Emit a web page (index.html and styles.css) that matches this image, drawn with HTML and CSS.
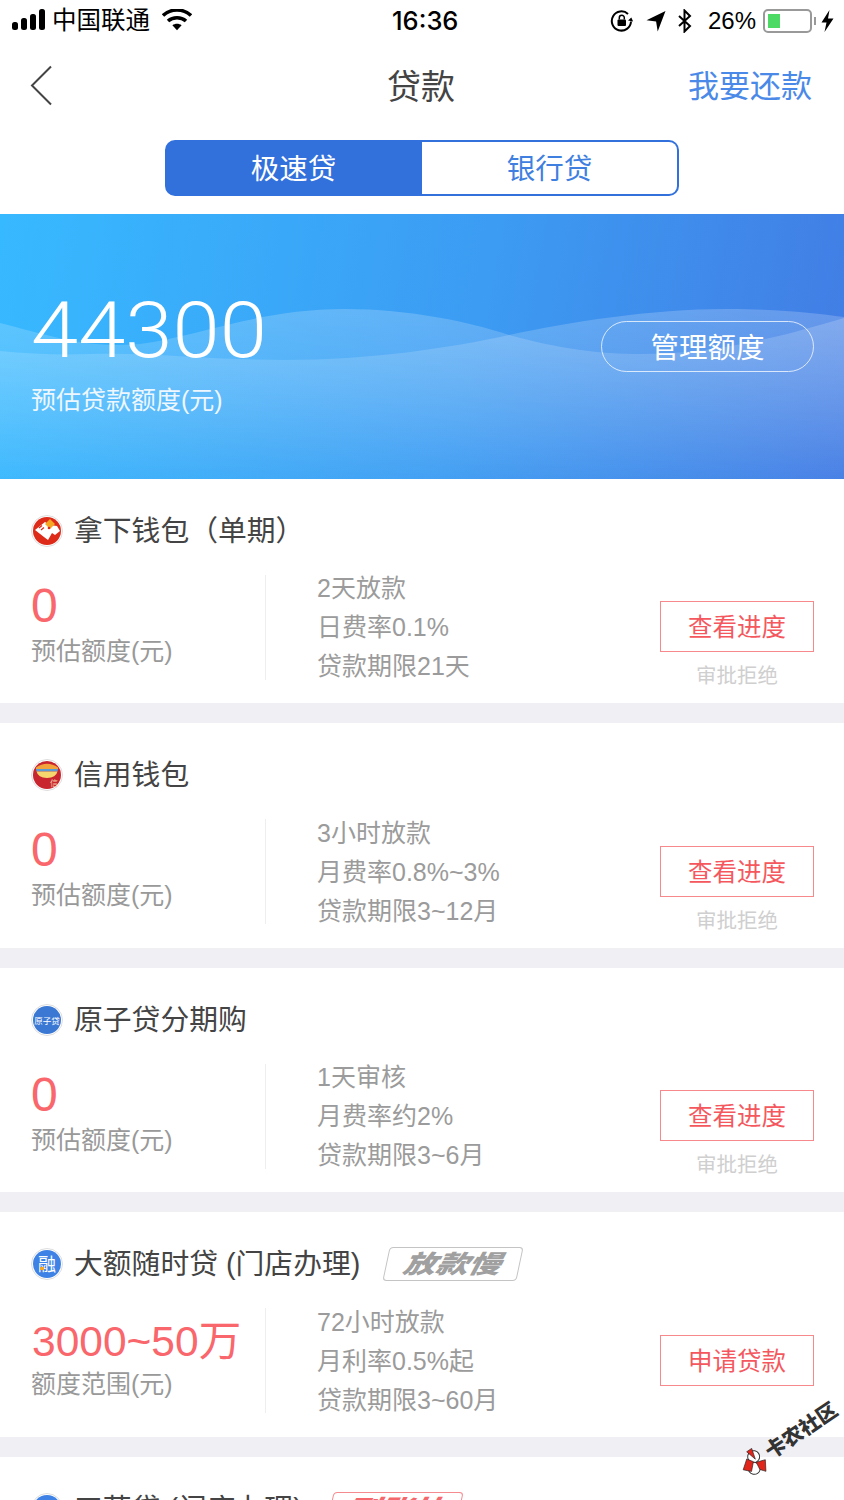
FILE: index.html
```html
<!DOCTYPE html>
<html lang="zh-CN">
<head>
  <meta charset="UTF-8">
  <title>贷款</title>
  <meta name="viewport" content="width=device-width, initial-scale=1.0">
  <link rel="stylesheet" href="styles.css">
</head>
<body>

<div class="page">
  <div class="status">
    <div class="status-left">
      <svg class="signal" width="34" height="22" viewBox="0 0 34 22"><rect x="0" y="13" width="6" height="8" rx="2.5"/><rect x="9" y="9" width="6" height="12" rx="2.5"/><rect x="18" y="5" width="6" height="16" rx="2.5"/><rect x="27" y="0" width="6" height="21" rx="2.5"/></svg>
      <span class="carrier">中国联通</span>
      <svg class="wifi" width="30" height="22" viewBox="0 0 30 22"><path d="M1 6.500C9 -.8 21 -.8 29 6.500" fill="none" stroke="#000" stroke-width="3.6"/><path d="M6 12C11 7.600 19 7.600 24 12" fill="none" stroke="#000" stroke-width="3.6"/><path d="M10.400 16.200C13 14.200 17 14.200 19.600 16.200L15 21.200Z"/></svg>
    </div>
    <div class="status-time">16:36</div>
    <div class="status-right">
      <svg width="24" height="24" viewBox="0 0 24 24"><path d="M21 12.500A9.600 9.600 0 1 1 18 5" fill="none" stroke="#000" stroke-width="2"/><path d="M21 8.500l2.600 3.600h-5.200z" transform="rotate(12 21 10)"/><rect x="7.500" y="10.500" width="8.500" height="6.500" rx="1"/><path d="M9.300 10.500V8.700a2.500 2.500 0 0 1 5 0v1.800" fill="none" stroke="#000" stroke-width="1.500"/></svg>
      <svg class="locate" width="20" height="22" viewBox="0 0 20 22"><path d="M19.500 1L0.500 10.200l9.600 1.200 1.600 10z"/></svg>
      <svg class="bt" width="16" height="24" viewBox="0 0 16 24"><path d="M2 7l11 10-5.500 5.500V1.500L13 7 2 17" fill="none" stroke="#000" stroke-width="2"/></svg>
      <span class="battery-text">26%</span>
      <div class="battery"><div class="battery-level"></div></div>
      <div class="battery-cap"></div>
      <svg class="bolt" width="13" height="22" viewBox="0 0 13 22"><path d="M8.500 0L0.500 12.500h5L3.500 22l9-13.500h-5.500z"/></svg>
    </div>
  </div>

  <div class="nav">
    <svg class="back" width="24" height="42" viewBox="0 0 24 42"><path d="M21 1.500L2 20.500l19 19" fill="none" stroke="#444" stroke-width="2"/></svg>
    <div class="nav-title">贷款</div>
    <div class="nav-action">我要还款</div>
  </div>

  <div class="tabs">
    <div class="tab tab-active">极速贷</div>
    <div class="tab">银行贷</div>
  </div>

  <div class="hero">
    <svg class="hero-waves" viewBox="0 0 844 265" preserveAspectRatio="none">
      <defs>
        <linearGradient id="waveFill" x1="0" y1="0" x2="0" y2="1">
          <stop offset="0" stop-color="#fff" stop-opacity=".2"/>
          <stop offset="1" stop-color="#fff" stop-opacity=".02"/>
        </linearGradient>
      </defs>
      <path fill="url(#waveFill)" d="M0 109C50 122 90 135 140 130C200 122 260 95 344 95C410 95 470 108 509 121C560 135 600 140 640 140C720 140 790 120 844 104V265H0Z"/>
      <path fill="url(#waveFill)" d="M0 137C30 140 60 141 90 140C150 138 210 146 285 146C370 146 450 134 509 121C570 108 650 95 727 95C775 95 815 99 844 103V265H0Z"/>
    </svg>
    <div class="hero-info">
      <div class="hero-amount">44300</div>
      <div class="hero-label">预估贷款额度(元)</div>
    </div>
    <div class="hero-btn">管理额度</div>
  </div>

  <div class="card">
    <div class="card-title">
      <svg class="logo" viewBox="0 0 32 32">
        <circle cx="16" cy="16" r="15.500" fill="#fff" stroke="#ddd"/>
        <circle cx="16" cy="16" r="14" fill="#de2a18"/>
        <path d="M4 15L14 7L19 10L26 11L29 16L24 20L21 18L17 25L13 22Z" fill="#fff"/>
        <path d="M14 9L19 4L24 9L19 14Z" fill="#f5a623"/>
        <path d="M8 13l3-2.500M10 15l3-2.500" stroke="#de2a18" stroke-width="1.200"/>
        <circle cx="18" cy="13" r="1.300" fill="#de2a18"/>
      </svg>
      <span>拿下钱包（单期）</span>
    </div>
    <div class="card-body">
      <div class="quota">
        <div class="quota-num">0</div>
        <div class="quota-label">预估额度(元)</div>
      </div>
      <div class="terms">
        <div>2天放款</div>
        <div>日费率0.1%</div>
        <div>贷款期限21天</div>
      </div>
      <div class="actions">
        <div class="btn">查看进度</div>
        <div class="btn-note">审批拒绝</div>
      </div>
    </div>
  </div>

  <div class="card">
    <div class="card-title">
      <svg class="logo" viewBox="0 0 32 32">
        <circle cx="16" cy="16" r="15.500" fill="#fff" stroke="#ddd"/>
        <circle cx="16" cy="16" r="14" fill="#c9252f"/>
        <path d="M5 8.500Q16 1 27 8.500V10H5z" fill="#f2a33c"/>
        <path d="M5 10H27L26.500 12.500H5.500z" fill="#5b9bd5"/>
        <path d="M5.500 12.500H26.500Q25 18.500 16 19Q7 18.500 5.500 12.500z" fill="#f5d76e"/>
        <text x="23" y="27" class="logo-text logo-text-light" font-size="8">信</text>
      </svg>
      <span>信用钱包</span>
    </div>
    <div class="card-body">
      <div class="quota">
        <div class="quota-num">0</div>
        <div class="quota-label">预估额度(元)</div>
      </div>
      <div class="terms">
        <div>3小时放款</div>
        <div>月费率0.8%~3%</div>
        <div>贷款期限3~12月</div>
      </div>
      <div class="actions">
        <div class="btn">查看进度</div>
        <div class="btn-note">审批拒绝</div>
      </div>
    </div>
  </div>

  <div class="card">
    <div class="card-title">
      <svg class="logo" viewBox="0 0 32 32">
        <circle cx="16" cy="16" r="15.500" fill="#fff" stroke="#ddd"/>
        <circle cx="16" cy="16" r="14" fill="#3a78d4"/>
        <text x="16" y="19.500" class="logo-text" font-size="8.500">原子贷</text>
      </svg>
      <span>原子贷分期购</span>
    </div>
    <div class="card-body">
      <div class="quota">
        <div class="quota-num">0</div>
        <div class="quota-label">预估额度(元)</div>
      </div>
      <div class="terms">
        <div>1天审核</div>
        <div>月费率约2%</div>
        <div>贷款期限3~6月</div>
      </div>
      <div class="actions">
        <div class="btn">查看进度</div>
        <div class="btn-note">审批拒绝</div>
      </div>
    </div>
  </div>

  <div class="card">
    <div class="card-title">
      <svg class="logo" viewBox="0 0 32 32">
        <circle cx="16" cy="16" r="15.500" fill="#fff" stroke="#ddd"/>
        <circle cx="16" cy="16" r="14" fill="#3f82e6"/>
        <text x="16" y="22.500" class="logo-text" font-size="18">融</text>
        <rect x="9" y="19" width="4" height="3" fill="#f5a623"/>
      </svg>
      <span>大额随时贷 (门店办理)</span>
      <div class="tag tag-slow"><span>放款慢</span></div>
    </div>
    <div class="card-body">
      <div class="quota">
        <div class="quota-num quota-range">3000~50万</div>
        <div class="quota-label">额度范围(元)</div>
      </div>
      <div class="terms">
        <div>72小时放款</div>
        <div>月利率0.5%起</div>
        <div>贷款期限3~60月</div>
      </div>
      <div class="actions">
        <div class="btn">申请贷款</div>
      </div>
    </div>
  </div>

  <div class="card">
    <div class="card-title">
      <svg class="logo" viewBox="0 0 32 32">
        <circle cx="16" cy="16" r="15.500" fill="#fff" stroke="#ddd"/>
        <circle cx="16" cy="16" r="14" fill="#3f82e6"/>
      </svg>
      <span>工薪贷 (门店办理)</span>
      <div class="tag tag-fast"><span>到账快</span></div>
    </div>
  </div>

  <div class="watermark">
    <svg width="30" height="30" viewBox="0 0 30 30">
      <circle cx="17" cy="10" r="6" fill="#fff" stroke="#333"/>
      <circle cx="11" cy="20" r="6" fill="#fff" stroke="#333"/>
      <path d="M1 15l9-7 4 6-7 7zM14 2l6 0-3 11zM16 16l9 3-6 10-4-5z" fill="#e1251b" stroke="#222" stroke-width=".6"/>
    </svg>
    <span>卡农社区</span>
  </div>
</div>

</body>
</html>
```

FILE: styles.css
```css
html, body {
  margin: 0;
  height: 1500px;
  overflow: hidden;
}
body {
  background: #fff;
  color: #444;
  font-family: "Liberation Sans", "Noto Sans CJK SC", sans-serif;
}
.page {
  position: relative;
  height: 1500px;
  overflow: hidden;
  background: #efeff4;
}

/* status bar */
.status {
  display: flex;
  align-items: center;
  justify-content: space-between;
  height: 42px;
  padding: 0 10px 0 12px;
  background: #fff;
  color: #000;
}
.status-left, .status-right {
  display: flex;
  align-items: center;
  width: 300px;
}
.status-right {
  justify-content: flex-end;
  width: 240px;
}
.signal {
  margin-top: -2px;
}
.carrier {
  margin-left: 6px;
  font-size: 24.500px;
  line-height: 42px;
}
.wifi {
  margin-left: 12px;
  margin-top: -2px;
}
.status-time {
  position: absolute;
  left: 392px;
  top: 4px;
  font-family: "Inter", sans-serif;
  font-size: 25.500px;
  font-weight: 500;
  line-height: 34px;
}
.locate {
  margin-left: 12px;
}
.bt {
  margin-left: 11px;
}
.battery-text {
  margin-left: 15px;
  font-size: 24px;
  line-height: 42px;
}
.battery {
  box-sizing: border-box;
  width: 49px;
  height: 24px;
  margin-left: 7px;
  padding: 3px;
  border: 2px solid #999;
  border-radius: 5px;
}
.battery-level {
  width: 12px;
  height: 14px;
  background: #4cd964;
}
.battery-cap {
  width: 2px;
  height: 8px;
  margin-left: 2px;
  background: #999;
}
.bolt {
  margin-left: 5px;
}

/* nav */
.nav {
  position: relative;
  display: flex;
  align-items: center;
  justify-content: space-between;
  height: 86px;
  padding: 0 32px 0 30px;
  background: #fff;
}
.back {
  margin-top: 2px;
}
.nav-title {
  position: absolute;
  left: 387px;
  top: 20px;
  font-size: 34px;
  line-height: 50px;
  color: #444;
}
.nav-action {
  padding-top: 4px;
  font-size: 31px;
  line-height: 50px;
  color: #4a89e8;
}

/* tabs */
.tabs {
  display: flex;
  justify-content: center;
  padding: 12px 0 18px;
  background: #fff;
}
.tab {
  box-sizing: border-box;
  width: 257px;
  height: 56px;
  border: 2px solid #3271dc;
  border-left: 0;
  border-radius: 0 10px 10px 0;
  font-size: 28.500px;
  line-height: 54px;
  text-align: center;
  color: #3f7fdf;
}
.tab-active {
  border-left: 2px solid #3271dc;
  border-radius: 10px 0 0 10px;
  background: #3271dc;
  color: #fff;
}

/* hero */
.hero {
  position: relative;
  display: flex;
  justify-content: space-between;
  height: 264.500px;
  padding: 0 30px 0 31px;
  background: linear-gradient(100deg, #37b9ff 0%, #3c9cf3 55%, #427ce4 100%);
  color: #fff;
}
.hero-waves {
  position: absolute;
  left: 0;
  top: 0;
  width: 844px;
  height: 265px;
}
.hero-info, .hero-btn {
  position: relative;
}
.hero-amount {
  margin-top: 72px;
  font-family: "Roboto", sans-serif;
  font-size: 78px;
  font-weight: 300;
  line-height: 90px;
  transform: scaleX(1.090);
  transform-origin: left center;
}
.hero-label {
  margin-top: 6px;
  font-size: 25px;
  line-height: 36px;
  color: #eef7ff;
}
.hero-btn {
  box-sizing: border-box;
  width: 213px;
  height: 51px;
  margin-top: 107px;
  border: 1px solid rgba(255, 255, 255, .75);
  border-radius: 26px;
  font-size: 28.500px;
  line-height: 52px;
  text-align: center;
}

/* product cards */
.card {
  box-sizing: border-box;
  height: 224.500px;
  margin-bottom: 20px;
  padding: 31px 30px 0 31px;
  background: #fff;
}
.card-title {
  display: flex;
  align-items: center;
  height: 42px;
  font-size: 28.800px;
  line-height: 42px;
  color: #444;
}
.logo {
  flex: none;
  width: 32px;
  height: 32px;
  margin-right: 11px;
}
.logo-text {
  fill: #fff;
  text-anchor: middle;
}
.logo-text-light {
  fill: #f0c9a0;
}
.tag {
  box-sizing: border-box;
  display: flex;
  align-items: center;
  justify-content: center;
  height: 34px;
  border-radius: 4px;
  transform: skewX(-12deg);
}
.tag span {
  display: inline-block;
  font-size: 25px;
  font-weight: 900;
  font-style: italic;
  line-height: 30px;
  transform: scaleX(1.300);
}
.tag-slow {
  width: 134px;
  margin-left: 26px;
  border: 1px solid #c4c4c4;
  color: #a0a0a0;
}
.tag-fast {
  width: 130px;
  margin-left: 27px;
  border: 1px solid #f58a8f;
  color: #f4676c;
}
.card-body {
  display: flex;
  height: 105px;
  margin-top: 23px;
}
.quota {
  flex: none;
  box-sizing: border-box;
  width: 235px;
  border-right: 1px solid #eeeeee;
}
.quota-num {
  height: 60px;
  font-size: 48px;
  line-height: 62px;
  color: #f9666b;
}
.quota-range {
  margin-left: 1px;
  font-size: 42.500px;
  line-height: 68px;
}
.quota-label {
  font-size: 25px;
  line-height: 32px;
  color: #999;
}
.terms {
  flex: 1;
  margin-top: -5.500px;
  padding-left: 51px;
  font-size: 25px;
  line-height: 39px;
  color: #9b9b9b;
}
.actions {
  flex: none;
  width: 154px;
  margin-top: 26.500px;
  text-align: center;
}
.btn {
  box-sizing: border-box;
  height: 51px;
  border: 1px solid #f7898d;
  font-size: 24.500px;
  line-height: 51px;
  color: #f4585e;
}
.btn-note {
  margin-top: 8px;
  font-size: 20.500px;
  line-height: 32px;
  color: #cfcfcf;
}

/* forum watermark over the page */
.watermark {
  position: absolute;
  left: 745px;
  top: 1446px;
  display: flex;
  align-items: center;
  white-space: nowrap;
  transform: rotate(-34deg);
  transform-origin: 14px 24px;
  font-size: 20.500px;
  font-weight: 900;
  line-height: 30px;
  color: #333;
}
```
